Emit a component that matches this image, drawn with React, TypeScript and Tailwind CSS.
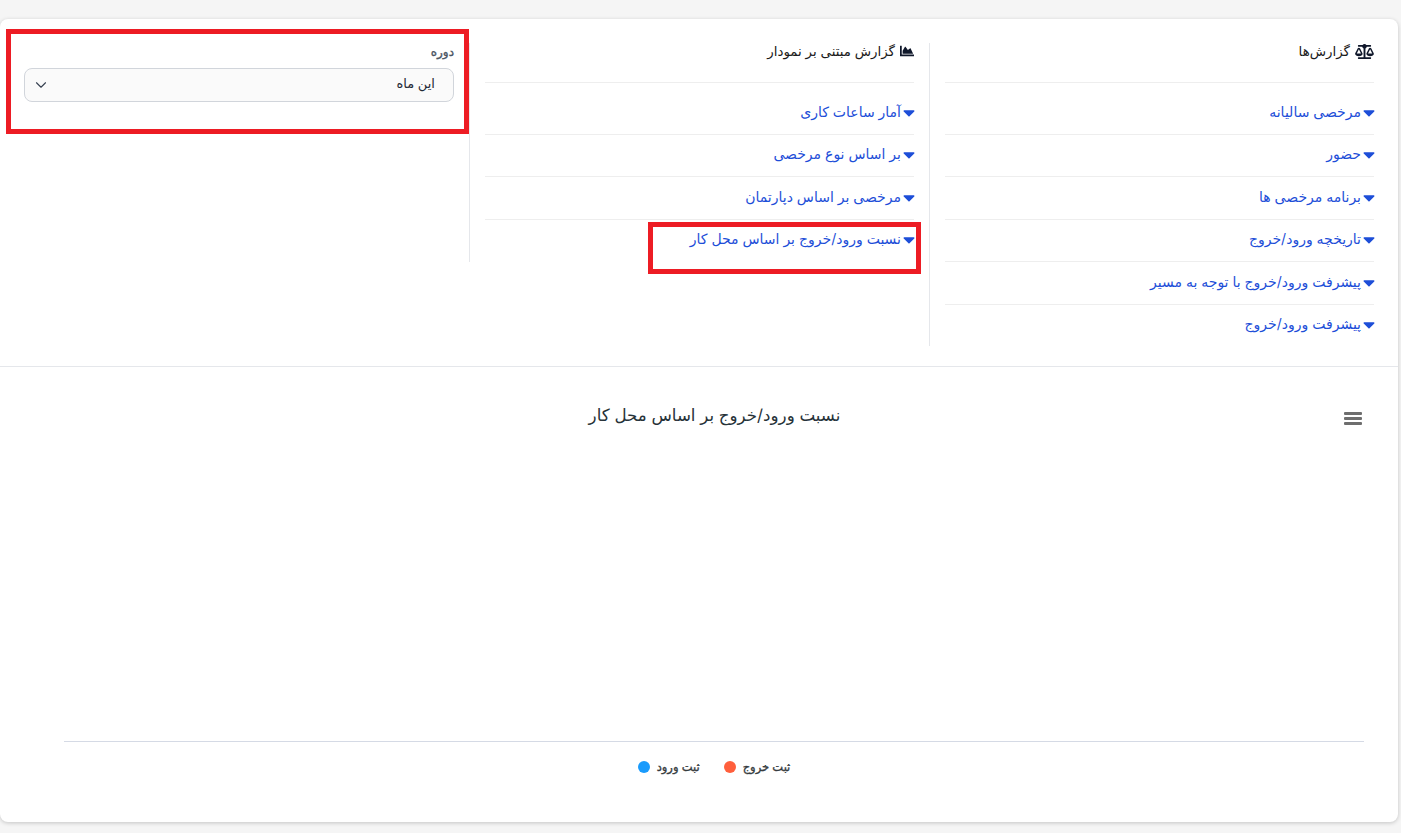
import { FaBalanceScale, FaChartArea, FaCaretDown } from "react-icons/fa";
import { ChevronDown } from "lucide-react";

const font = "[font-family:Inter,'DejaVu_Sans',sans-serif]";

function Item({ label, last }: { label: string; last?: boolean }) {
  return (
    <div className={`h-[42.5px] pt-[8.5px] flex items-start gap-[2px] text-[14px] leading-[21px] text-[#1d4ed8] ${last ? "" : "border-b border-[#eeeeee]"}`}>
      <FaCaretDown className="w-[12px] h-[19px] -mr-[1px] mt-[2px] text-[#1d4ed8] shrink-0" />
      <span>{label}</span>
    </div>
  );
}

function Column({ icon, title, items }: { icon: React.ReactNode; title: string; items: string[] }) {
  return (
    <div>
      <div className="h-[40px] flex items-start gap-[5px] text-[13.4px] leading-[16px] text-[#1a1a1a] border-b border-[#eeeeee] mb-[9px]">
        {icon}
        <span>{title}</span>
      </div>
      {items.map((t, i) => (
        <Item key={t} label={t} last={i === items.length - 1} />
      ))}
    </div>
  );
}

export default function App() {
  return (
    <div dir="rtl" className={`${font} relative min-h-[833px] bg-[#f5f5f5] pt-[19px] pb-[11px] pr-[3px]`}>
      <div className="h-[803px] rounded-[8px] bg-white shadow-[0_1px_4px_rgba(0,0,0,0.2)] flex flex-col">
        <div className="h-[348px] border-b border-[#e5e7eb] flex items-start pt-[24px]">
          <div className="w-[469px] pr-[24px] pl-[15px] border-l border-[#e5e7eb] h-[303px] shrink-0">
            <Column
              icon={<FaBalanceScale className="w-[19px] h-[15px] mt-[1px] text-[#0f172a] shrink-0" />}
              title="گزارش‌ها"
              items={["مرخصی سالیانه", "حضور", "برنامه مرخصی ها", "تاریخچه ورود/خروج", "پیشرفت ورود/خروج با توجه به مسیر", "پیشرفت ورود/خروج"]}
            />
          </div>
          <div className="w-[460px] px-[15px] border-l border-[#e5e7eb] h-[219px] shrink-0">
            <Column
              icon={<FaChartArea className="w-[14px] h-[14px] mt-[1px] text-[#0f172a] shrink-0" />}
              title="گزارش مبتنی بر نمودار"
              items={["آمار ساعات کاری", "بر اساس نوع مرخصی", "مرخصی بر اساس دپارتمان", "نسبت ورود/خروج بر اساس محل کار"]}
            />
          </div>
          <div className="flex-1 pr-[15px] pl-[24px]">
            <div className="text-[12px] leading-[16px] [-webkit-text-stroke:0.35px_#4b5563] text-[#4b5563] mb-[8px] pt-[1px]">دوره</div>
            <div className="h-[34px] rounded-[8px] border border-[#d1d5db] bg-[#fafafa] flex items-center justify-between pr-[18px] pl-[7px] text-[13px] text-[#1f2937]">
              <span className="pb-[2px]">این ماه</span>
              <ChevronDown className="w-[18px] h-[18px] text-[#374151]" strokeWidth={1.5} />
            </div>
          </div>
        </div>

        <div className="flex-1 flex flex-col pt-[37px]">
          <div className="relative h-[338px] border-b border-[#d5dae5] ml-[64px] mr-[34px]">
            <div className="absolute top-[8px] left-[1280px] flex flex-col gap-[2px]">
              <span className="block w-[18px] h-[3px] rounded-[1px] bg-[#6e6e6e]" />
              <span className="block w-[18px] h-[3px] rounded-[1px] bg-[#6e6e6e]" />
              <span className="block w-[18px] h-[3px] rounded-[1px] bg-[#6e6e6e]" />
            </div>
          </div>
          <div className="flex justify-center gap-[24px] pt-[18px] text-[11.5px] leading-[14px] [-webkit-text-stroke:0.35px_#373d3f] text-[#373d3f] pl-[30px]">
            <div className="flex items-center gap-[7px]">
              <span className="w-[12px] h-[12px] rounded-full bg-[#ff5f3c]" />
              <span className="order-first">ثبت خروج</span>
            </div>
            <div className="flex items-center gap-[7px]">
              <span className="w-[12px] h-[12px] rounded-full bg-[#1a9bfc]" />
              <span className="order-first">ثبت ورود</span>
            </div>
          </div>
        </div>
      </div>

      <div className="absolute top-[405px] left-[0px] w-[1429px] text-center text-[16.7px] leading-[20px] text-[#263238]">نسبت ورود/خروج بر اساس محل کار</div>
      <div className="absolute left-[6px] top-[29px] w-[463px] h-[105px] border-[5px] border-[#ed1c24]" />
      <div className="absolute left-[648px] top-[222px] w-[273px] h-[52px] border-[5px] border-[#ed1c24]" />
    </div>
  );
}
